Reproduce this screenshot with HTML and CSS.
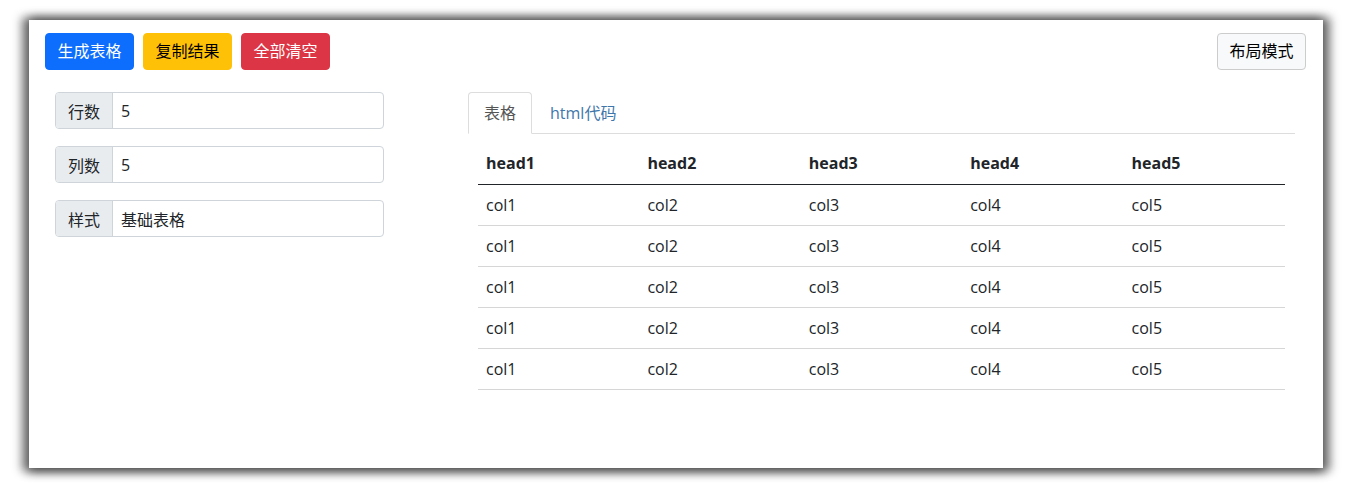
FILE: index.html
```html
<!DOCTYPE html>
<html lang="zh">
<head>
<meta charset="utf-8">
<title>表格生成</title>
<link rel="stylesheet" href="styles.css">
</head>
<body>
<div class="panel">
  <div class="toolbar">
    <div class="btn-group">
      <button class="btn btn-primary">生成表格</button>
      <button class="btn btn-warning">复制结果</button>
      <button class="btn btn-danger">全部清空</button>
    </div>
    <button class="btn btn-light">布局模式</button>
  </div>
  <div class="main">
    <div class="left">
      <div class="input-group"><span class="ig-label">行数</span><span class="ig-input">5</span></div>
      <div class="input-group"><span class="ig-label">列数</span><span class="ig-input">5</span></div>
      <div class="input-group"><span class="ig-label">样式</span><span class="ig-input">基础表格</span></div>
    </div>
    <div class="right">
      <ul class="tabs">
        <li class="tab active">表格</li>
        <li class="tab link">html代码</li>
      </ul>
      <div class="tab-content">
        <table class="table">
          <thead>
            <tr><th>head1</th><th>head2</th><th>head3</th><th>head4</th><th>head5</th></tr>
          </thead>
          <tbody>
            <tr><td>col1</td><td>col2</td><td>col3</td><td>col4</td><td>col5</td></tr>
            <tr><td>col1</td><td>col2</td><td>col3</td><td>col4</td><td>col5</td></tr>
            <tr><td>col1</td><td>col2</td><td>col3</td><td>col4</td><td>col5</td></tr>
            <tr><td>col1</td><td>col2</td><td>col3</td><td>col4</td><td>col5</td></tr>
            <tr><td>col1</td><td>col2</td><td>col3</td><td>col4</td><td>col5</td></tr>
          </tbody>
        </table>
      </div>
    </div>
  </div>
</div>
</body>
</html>
```

FILE: styles.css
```css
* { box-sizing: border-box; }
html, body { margin: 0; padding: 0; background: #fff; }
body {
  padding: 20px 31px 23px 29px;
  font-family: "Open Sans", "Noto Sans CJK SC", sans-serif;
  font-size: 16px;
  color: #212529;
}
.panel {
  width: 1294px;
  height: 448px;
  background: #fff;
  box-shadow: -5px 0 9px 3px rgba(0,0,0,0.38), 5px 0 9px 3px rgba(0,0,0,0.38), 0 2px 9px 3px rgba(0,0,0,0.3);
  padding: 13px 17px 0 16px;
}
.toolbar {
  display: flex;
  justify-content: space-between;
  align-items: flex-start;
}
.btn-group { display: flex; gap: 9px; }
.btn {
  font-family: inherit;
  font-size: 16px;
  height: 37px;
  line-height: 35px;
  padding: 0 11px;
  border: 1px solid transparent;
  border-radius: 4px;
  width: 89px;
  text-align: center;
}
.btn-primary { background: #0d6efd; border-color: #0d6efd; color: #fff; }
.btn-warning { background: #ffc107; border-color: #ffc107; color: #000; }
.btn-danger { background: #dc3545; border-color: #dc3545; color: #fff; }
.btn-light { background: #f8f9fa; border-color: #ccc; color: #000; }

.main {
  display: flex;
  margin-top: 22px;
}
.left {
  width: 423px;
  padding-left: 10px;
  display: flex;
  flex-direction: column;
  gap: 17px;
}
.input-group {
  display: flex;
  width: 329px;
  height: 37px;
  border: 1px solid #ced4da;
  border-radius: 4px;
  overflow: hidden;
}
.ig-label {
  width: 57px;
  background: #e9ecef;
  border-right: 1px solid #ced4da;
  display: flex;
  align-items: center;
  justify-content: center;
  color: #212529;
}
.ig-input {
  flex: 1;
  display: flex;
  align-items: center;
  padding-left: 8px;
  color: #212529;
}
.right { width: 827px; }
.tabs {
  list-style: none;
  margin: 0;
  padding: 0;
  display: flex;
  border-bottom: 1px solid #ddd;
  height: 42px;
}
.tab {
  height: 42px;
  padding: 0 15px;
  line-height: 40px;
  margin-right: 2px;
  margin-bottom: -1px;
  border: 1px solid transparent;
  border-radius: 4px 4px 0 0;
}
.tab.active {
  color: #555;
  background: #fff;
  border-color: #ddd #ddd transparent;
}
.tab.link { color: #3f77ab; }
.tab-content { padding: 9px 10px 0; }
.table {
  width: 100%;
  border-collapse: collapse;
  table-layout: fixed;
}
.table th, .table td {
  text-align: left;
  padding: 0 8px;
  height: 41px;
  border-bottom: 1px solid #d6d6d6;
}
.table th {
  font-weight: 700;
  border-bottom: 1px solid #212529;
}
```
